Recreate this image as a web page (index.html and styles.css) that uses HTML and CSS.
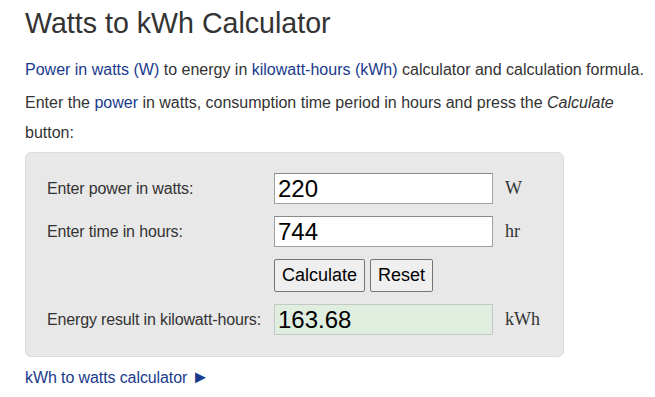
FILE: index.html
```html
<!DOCTYPE html>
<html>
<head>
  <meta charset="UTF-8">
  <title>Watts to kWh Calculator</title>
  <link rel="stylesheet" href="styles.css">
</head>
<body>

  <h1>Watts to kWh Calculator</h1>

  <p class="intro"><a href="#">Power in watts (W)</a> to energy in <a href="#">kilowatt-hours (kWh)</a> calculator and calculation formula.</p>
  <p class="intro">Enter the <a href="#">power</a> in watts, consumption time period in hours and press the <i>Calculate</i><br>button:</p>

  <form class="calc" onsubmit="return false">
    <label for="power">Enter power in watts:</label>
    <input type="text" id="power" value="220">
    <span class="unit">W</span>

    <label for="hours">Enter time in hours:</label>
    <input type="text" id="hours" value="744">
    <span class="unit">hr</span>

    <span></span>
    <div class="buttons">
      <button type="button" onclick="calculate()">Calculate</button>
      <button type="button" onclick="resetForm()">Reset</button>
    </div>
    <span></span>

    <label for="result">Energy result in kilowatt-hours:</label>
    <input type="text" id="result" class="result" value="163.68">
    <span class="unit">kWh</span>
  </form>

  <p class="next"><a href="#">kWh to watts calculator <span class="arrow">&#9658;</span></a></p>

  <script>
    function calculate() {
      const p = parseFloat(document.getElementById("power").value);
      const h = parseFloat(document.getElementById("hours").value);
      document.getElementById("result").value = (p * h / 1000).toFixed(2);
    }

    function resetForm() {
      document.getElementById("power").value = "";
      document.getElementById("hours").value = "";
      document.getElementById("result").value = "";
    }
  </script>

</body>
</html>
```

FILE: styles.css
```css
body {
  font-family: "Liberation Sans", Arial, sans-serif;
  font-size: 16px;
  color: #333;
  margin: 0;
  padding: 0 8px 0 25px;
  background: #fff;
}

a {
  color: #1a3a8c;
  text-decoration: none;
}

h1 {
  font-size: 28.6px;
  font-weight: normal;
  line-height: 33px;
  margin: 7px 0 0;
  color: #333;
}

.intro {
  line-height: 30px;
  margin: 3px 0 0;
  white-space: nowrap;
}

.intro:first-of-type {
  margin-top: 15px;
}

.calc {
  width: 516px;
  margin-top: 4px;
  padding: 20px 0 21px 21px;
  background: #e8e8e8;
  border: 1px solid #dcdcdc;
  border-radius: 6px;
  display: grid;
  grid-template-columns: 215px 219px auto;
  column-gap: 12px;
  row-gap: 12px;
  align-items: center;
}

.calc label {
  color: #333;
  letter-spacing: -0.15px;
}

.calc input {
  font-family: "Liberation Sans", Arial, sans-serif;
  font-size: 24px;
  height: 31px;
  box-sizing: border-box;
  padding: 0 3px;
  border: 1px solid #a0a0a0;
  border-top-color: #8a8a8a;
  background: #fff;
  color: #000;
  width: 219px;
}

.calc input.result {
  background: #dfeedf;
  border-color: #c4c9c4;
}

.unit {
  font-family: "Liberation Serif", "Times New Roman", serif;
  font-size: 18px;
  color: #333;
}

.buttons {
  display: flex;
  gap: 5px;
}

.buttons button {
  font-family: "Liberation Sans", Arial, sans-serif;
  font-size: 18px;
  height: 33px;
  padding: 0 7px;
  background: #efefef;
  border: 1px solid #767676;
  border-radius: 2px;
  color: #000;
}

.next {
  line-height: 30px;
  margin: 6px 0 0;
  letter-spacing: -0.1px;
}

.arrow {
  font-size: 18px;
  line-height: 16px;
}
```
